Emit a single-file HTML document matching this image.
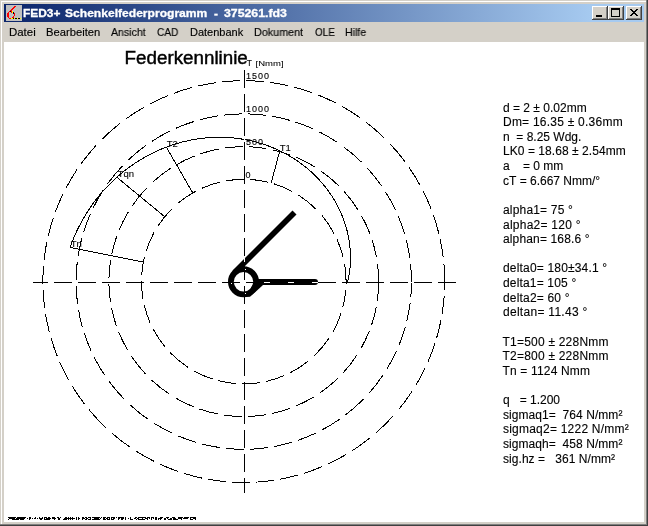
<!DOCTYPE html>
<html><head><meta charset="utf-8">
<style>
html,body{margin:0;padding:0;}
body{width:648px;height:526px;position:relative;overflow:hidden;background:#d4d0c8;font-family:"Liberation Sans",sans-serif;}
.abs{position:absolute;}
#title{left:4px;top:4px;width:640px;height:18px;background:linear-gradient(to right,#0a246a 0px,#a6caf0 588px,#a6caf0 640px);}
.tt{position:absolute;top:4px;height:18px;line-height:18px;color:#fff;font-weight:bold;font-size:11px;white-space:pre;-webkit-text-stroke:0.3px #fff;transform-origin:0 0;will-change:transform;}
#menu{left:4px;top:22px;width:640px;height:20px;}
.mi{position:absolute;top:22px;height:20px;line-height:20px;font-size:11px;color:#000;white-space:pre;-webkit-text-stroke:0.15px #000;transform-origin:0 0;will-change:transform;}
#content{left:4px;top:42px;width:640px;height:480px;background:#fff;}
.btn{position:absolute;top:6px;width:16px;height:14px;background:#d4d0c8;box-sizing:border-box;
 box-shadow: inset -1px -1px #404040, inset 1px 1px #ffffff, inset -2px -2px #808080, inset 2px 2px #d4d0c8;}
svg{position:absolute;left:0;top:0;will-change:transform;}
</style></head><body>
<!-- frame -->
<div class="abs" style="left:1px;top:1px;width:645px;height:524px;border-left:1px solid #fff;border-top:1px solid #fff;"></div>
<div class="abs" style="left:646px;top:0;width:1px;height:525px;background:#808080"></div>
<div class="abs" style="left:0;top:524px;width:647px;height:1px;background:#808080"></div>
<div class="abs" style="left:647px;top:0;width:1px;height:526px;background:#404040"></div>
<div class="abs" style="left:0;top:525px;width:648px;height:1px;background:#404040"></div>
<div id="title" class="abs"></div>
<div class="tt" style="left:22.7px;transform:scaleX(1.083)">FED3+</div>
<div class="tt" style="left:65px;transform:scaleX(1.098)">Schenkelfederprogramm</div>
<div class="tt" style="left:213.5px;transform:scaleX(1.083)">-</div>
<div class="tt" style="left:224px;transform:scaleX(1.118)">375261.fd3</div>
<div class="btn" style="left:592px"></div>
<div class="btn" style="left:608px"></div>
<div class="btn" style="left:626px"></div>
<div class="mi" style="left:9.3px;transform:scaleX(1.04)">Datei</div>
<div class="mi" style="left:46.3px;transform:scaleX(1.02)">Bearbeiten</div>
<div class="mi" style="left:110.5px;transform:scaleX(0.96)">Ansicht</div>
<div class="mi" style="left:157px;transform:scaleX(0.92)">CAD</div>
<div class="mi" style="left:190px">Datenbank</div>
<div class="mi" style="left:254px;transform:scaleX(0.98)">Dokument</div>
<div class="mi" style="left:314.5px;transform:scaleX(0.9)">OLE</div>
<div class="mi" style="left:345px;transform:scaleX(0.96)">Hilfe</div>
<div id="content" class="abs"></div>
<svg width="648" height="526" viewBox="0 0 648 526">
 <!-- icon -->
 <g transform="translate(6,5)" shape-rendering="crispEdges">
  <rect x="0" y="0" width="16" height="16" fill="#c0c0c0"/>
  <g fill="#ff0000">
   <rect x="8" y="1" width="2" height="1"/><rect x="7" y="2" width="2" height="1"/><rect x="6" y="3" width="2" height="1"/>
   <rect x="5" y="4" width="2" height="1"/><rect x="4" y="5" width="2" height="1"/><rect x="3" y="6" width="1" height="1"/>
   <rect x="5" y="6" width="1" height="2"/><rect x="2" y="7" width="1" height="1"/><rect x="1" y="8" width="2" height="3"/>
   <rect x="8" y="8" width="1" height="3"/><rect x="1" y="11" width="2" height="1"/><rect x="7" y="11" width="1" height="1"/>
   <rect x="2" y="12" width="1" height="1"/><rect x="6" y="12" width="2" height="1"/><rect x="3" y="13" width="2" height="1"/>
  </g>
  <g fill="#000"><rect x="4" y="6" width="1" height="1"/><rect x="7" y="7" width="1" height="2"/><rect x="7" y="13" width="1" height="1"/>
   <rect x="9" y="13" width="2" height="1"/><rect x="12" y="13" width="2" height="1"/></g>
  <g fill="#ffff00"><rect x="6" y="6" width="1" height="2"/><rect x="5" y="13" width="2" height="1"/><rect x="8" y="13" width="1" height="1"/>
   <rect x="11" y="13" width="1" height="1"/><rect x="14" y="13" width="1" height="1"/></g>
 </g>
 <!-- caption glyphs -->
 <g fill="#000" shape-rendering="crispEdges">
  <rect x="596" y="15" width="6" height="2"/>
  <path d="M611 8h9v9h-9z M612 10v6h7v-6z" fill-rule="evenodd"/>
  <rect x="630" y="9" width="2" height="1"/><rect x="636" y="9" width="2" height="1"/><rect x="631" y="10" width="2" height="1"/><rect x="635" y="10" width="2" height="1"/><rect x="632" y="11" width="4" height="1"/><rect x="633" y="12" width="2" height="1"/><rect x="632" y="13" width="4" height="1"/><rect x="631" y="14" width="2" height="1"/><rect x="635" y="14" width="2" height="1"/><rect x="630" y="15" width="2" height="1"/><rect x="636" y="15" width="2" height="1"/>
 </g>
 <!-- drawing -->
 <g fill="none" stroke="#000" stroke-width="1" shape-rendering="crispEdges">
  <g><path d="M346.10 281.60A102.30 102.30 0 0 0 344.50 263.57M343.21 257.45A102.30 102.30 0 0 0 337.04 239.51M334.06 233.46A102.30 102.30 0 0 0 321.87 215.49M316.38 209.51A102.30 102.30 0 0 0 298.27 195.01M292.33 191.54A102.30 102.30 0 0 0 274.27 183.94M268.25 182.26A102.30 102.30 0 0 0 250.23 179.50M244.24 179.30A102.30 102.30 0 0 0 226.20 180.83M220.20 182.06A102.30 102.30 0 0 0 202.23 188.13M196.15 191.07A102.30 102.30 0 0 0 178.22 203.09M172.20 208.54A102.30 102.30 0 0 0 157.57 226.55M154.01 232.58A102.30 102.30 0 0 0 146.31 250.59M144.60 256.60A102.30 102.30 0 0 0 141.74 274.61M141.50 280.60A102.30 102.30 0 0 0 142.93 298.65M144.13 304.65A102.30 102.30 0 0 0 150.10 322.66M153.01 328.75A102.30 102.30 0 0 0 164.93 346.75M170.26 352.71A102.30 102.30 0 0 0 188.28 367.52M194.28 371.12A102.30 102.30 0 0 0 212.38 378.95M218.38 380.69A102.30 102.30 0 0 0 236.37 383.63M242.36 383.89A102.30 102.30 0 0 0 260.41 382.54M266.42 381.37A102.30 102.30 0 0 0 284.46 375.47M290.45 372.64A102.30 102.30 0 0 0 308.42 360.91M314.42 355.62A102.30 102.30 0 0 0 329.42 337.59M333.04 331.61A102.30 102.30 0 0 0 340.98 313.56M342.75 307.56A102.30 102.30 0 0 0 345.79 289.59M346.08 283.60A102.30 102.30 0 0 0 346.10 281.60"/><path d="M378.70 281.60A134.90 134.90 0 0 0 377.48 263.53M376.53 257.48A134.90 134.90 0 0 0 371.98 239.56M369.85 233.55A134.90 134.90 0 0 0 361.43 215.56M357.85 209.55A134.90 134.90 0 0 0 344.22 191.52M338.52 185.55A134.90 134.90 0 0 0 320.54 170.66M314.47 166.69A134.90 134.90 0 0 0 296.49 157.42M290.45 155.02A134.90 134.90 0 0 0 272.46 149.78M266.45 148.61A134.90 134.90 0 0 0 248.55 146.78M242.55 146.71A134.90 134.90 0 0 0 224.49 148.09M218.45 149.10A134.90 134.90 0 0 0 200.45 153.85M194.47 156.04A134.90 134.90 0 0 0 176.46 164.71M170.49 168.36A134.90 134.90 0 0 0 152.52 182.28M146.53 188.13A134.90 134.90 0 0 0 132.01 206.10M128.18 212.10A134.90 134.90 0 0 0 119.09 230.18M116.79 236.13A134.90 134.90 0 0 0 111.72 254.16M110.61 260.19A134.90 134.90 0 0 0 108.95 278.10M108.92 284.10A134.90 134.90 0 0 0 110.47 302.15M111.54 308.18A134.90 134.90 0 0 0 116.46 326.13M118.75 332.21A134.90 134.90 0 0 0 127.60 350.13M131.38 356.17A134.90 134.90 0 0 0 145.67 374.16M151.60 380.07A134.90 134.90 0 0 0 169.54 394.22M175.59 397.99A134.90 134.90 0 0 0 193.65 406.83M199.62 409.06A134.90 134.90 0 0 0 217.59 413.93M223.62 414.98A134.90 134.90 0 0 0 241.55 416.48M247.55 416.45A134.90 134.90 0 0 0 265.58 414.73M271.60 413.60A134.90 134.90 0 0 0 289.63 408.48M295.57 406.17A134.90 134.90 0 0 0 313.62 397.03M319.61 393.18A134.90 134.90 0 0 0 337.63 378.52M343.38 372.61A134.90 134.90 0 0 0 357.24 354.60M360.94 348.51A134.90 134.90 0 0 0 369.49 330.59M371.67 324.59A134.90 134.90 0 0 0 376.37 306.58M377.36 300.54A134.90 134.90 0 0 0 378.70 282.60"/><path d="M411.50 281.60A167.70 167.70 0 0 0 410.53 263.63M409.79 257.68A167.70 167.70 0 0 0 406.17 239.67M404.50 233.65A167.70 167.70 0 0 0 398.05 215.79M395.33 209.75A167.70 167.70 0 0 0 385.50 191.91M381.49 185.87A167.70 167.70 0 0 0 367.11 167.94M361.37 162.02A167.70 167.70 0 0 0 343.42 146.69M337.39 142.44A167.70 167.70 0 0 0 319.50 131.96M313.53 129.08A167.70 167.70 0 0 0 295.60 122.10M289.62 120.28A167.70 167.70 0 0 0 271.58 116.22M265.65 115.33A167.70 167.70 0 0 0 247.71 113.95M241.71 113.91A167.70 167.70 0 0 0 223.75 115.10M217.81 115.93A167.70 167.70 0 0 0 199.85 119.76M193.97 121.48A167.70 167.70 0 0 0 175.95 128.24M169.95 131.04A167.70 167.70 0 0 0 152.04 141.23M146.05 145.33A167.70 167.70 0 0 0 128.16 160.15M122.24 166.07A167.70 167.70 0 0 0 107.44 183.98M103.35 189.97A167.70 167.70 0 0 0 93.17 207.89M90.37 213.90A167.70 167.70 0 0 0 83.67 231.80M81.92 237.80A167.70 167.70 0 0 0 78.10 255.76M77.28 261.71A167.70 167.70 0 0 0 76.11 279.66M76.15 285.66A167.70 167.70 0 0 0 77.55 303.60M78.44 309.53A167.70 167.70 0 0 0 82.49 327.45M84.31 333.43A167.70 167.70 0 0 0 91.30 351.36M94.23 357.44A167.70 167.70 0 0 0 104.73 375.32M108.99 381.34A167.70 167.70 0 0 0 124.24 399.19M130.26 405.02A167.70 167.70 0 0 0 148.20 419.38M154.14 423.32A167.70 167.70 0 0 0 172.09 433.19M178.13 435.91A167.70 167.70 0 0 0 196.00 442.34M202.02 444.01A167.70 167.70 0 0 0 219.91 447.59M225.86 448.34A167.70 167.70 0 0 0 243.83 449.30M249.83 449.19A167.70 167.70 0 0 0 267.75 447.58M273.80 446.60A167.70 167.70 0 0 0 291.66 442.33M297.62 440.43A167.70 167.70 0 0 0 315.57 433.17M321.61 430.16A167.70 167.70 0 0 0 339.55 419.27M345.51 414.93A167.70 167.70 0 0 0 363.40 399.15M369.04 393.13A167.70 167.70 0 0 0 382.90 375.27M386.76 369.27A167.70 167.70 0 0 0 396.33 351.30M398.92 345.34A167.70 167.70 0 0 0 405.13 327.39M406.72 321.35A167.70 167.70 0 0 0 410.08 303.41M410.75 297.45A167.70 167.70 0 0 0 411.50 281.60"/><path d="M444.70 281.60A200.90 200.90 0 0 0 443.88 263.50M443.25 257.53A200.90 200.90 0 0 0 440.25 239.54M438.87 233.57A200.90 200.90 0 0 0 433.51 215.48M431.31 209.49A200.90 200.90 0 0 0 423.39 191.55M420.20 185.46A200.90 200.90 0 0 0 409.13 167.47M404.83 161.48A200.90 200.90 0 0 0 389.71 143.51M383.83 137.55A200.90 200.90 0 0 0 365.77 121.96M359.82 117.59A200.90 200.90 0 0 0 341.75 106.20M335.80 103.00A200.90 200.90 0 0 0 317.83 94.84M311.75 92.54A200.90 200.90 0 0 0 293.71 87.00M287.76 85.57A200.90 200.90 0 0 0 269.79 82.39M263.71 81.69A200.90 200.90 0 0 0 245.74 80.71M239.74 80.74A200.90 200.90 0 0 0 221.78 81.91M215.70 82.67A200.90 200.90 0 0 0 197.77 86.04M191.71 87.57A200.90 200.90 0 0 0 173.74 93.31M167.68 95.68A200.90 200.90 0 0 0 149.69 104.10M143.67 107.43A200.90 200.90 0 0 0 125.74 119.05M119.66 123.64A200.90 200.90 0 0 0 101.72 139.56M95.92 145.61A200.90 200.90 0 0 0 81.21 163.59M76.99 169.64A200.90 200.90 0 0 0 66.22 187.66M63.16 193.68A200.90 200.90 0 0 0 55.49 211.60M53.36 217.61A200.90 200.90 0 0 0 48.23 235.63M46.92 241.62A200.90 200.90 0 0 0 44.10 259.64M43.54 265.62A200.90 200.90 0 0 0 42.91 283.73M43.06 289.72A200.90 200.90 0 0 0 44.60 307.65M45.48 313.71A200.90 200.90 0 0 0 49.25 331.69M50.90 337.72A200.90 200.90 0 0 0 57.06 355.69M59.55 361.69A200.90 200.90 0 0 0 68.49 379.71M71.95 385.65A200.90 200.90 0 0 0 84.27 403.71M89.02 409.68A200.90 200.90 0 0 0 105.75 427.56M111.77 433.02A200.90 200.90 0 0 0 129.83 447.04M135.76 450.98A200.90 200.90 0 0 0 153.80 461.21M159.77 464.08A200.90 200.90 0 0 0 177.86 471.37M183.79 473.33A200.90 200.90 0 0 0 201.80 478.06M207.81 479.25A200.90 200.90 0 0 0 225.89 481.70M231.87 482.15A200.90 200.90 0 0 0 249.86 482.41M255.86 482.14A200.90 200.90 0 0 0 273.88 480.24M279.92 479.23A200.90 200.90 0 0 0 297.94 475.07M303.93 473.29A200.90 200.90 0 0 0 321.88 466.71M327.94 464.03A200.90 200.90 0 0 0 345.87 454.64M351.94 450.91A200.90 200.90 0 0 0 369.90 438.00M375.93 432.94A200.90 200.90 0 0 0 393.44 415.65M398.66 409.58A200.90 200.90 0 0 0 411.92 391.58M415.72 385.55A200.90 200.90 0 0 0 425.36 367.61M428.10 361.57A200.90 200.90 0 0 0 434.90 343.57M436.74 337.60A200.90 200.90 0 0 0 441.09 319.50M442.14 313.59A200.90 200.90 0 0 0 444.21 295.59M444.54 289.60A200.90 200.90 0 0 0 444.70 281.60"/></g>
  <path d="M347.50 282.50 L347.93 280.69 L348.33 278.87 L348.69 277.04 L349.02 275.19 L349.32 273.33 L349.59 271.45 L349.82 269.57 L350.02 267.67 L350.18 265.76 L350.31 263.84 L350.41 261.91 L350.47 259.98 L350.49 258.03 L350.48 256.08 L350.43 254.12 L350.34 252.15 L350.22 250.18 L350.07 248.20 L349.87 246.22 L349.64 244.23 L349.37 242.24 L349.06 240.25 L348.72 238.26 L348.34 236.27 L347.92 234.28 L347.46 232.28 L346.96 230.29 L346.43 228.30 L345.86 226.32 L345.25 224.33 L344.60 222.36 L343.91 220.38 L343.18 218.41 L342.42 216.45 L341.61 214.50 L340.77 212.55 L339.89 210.62 L338.97 208.69 L338.02 206.77 L337.02 204.87 L335.99 202.97 L334.91 201.09 L333.81 199.22 L332.66 197.37 L331.47 195.53 L330.25 193.70 L328.99 191.89 L327.69 190.10 L326.36 188.33 L324.99 186.58 L323.58 184.84 L322.14 183.12 L320.66 181.43 L319.15 179.76 L317.60 178.11 L316.01 176.48 L314.39 174.87 L312.74 173.29 L311.05 171.74 L309.33 170.21 L307.58 168.70 L305.79 167.23 L303.97 165.78 L302.12 164.36 L300.24 162.97 L298.32 161.61 L296.38 160.28 L294.40 158.98 L292.40 157.71 L290.37 156.48 L288.31 155.28 L286.22 154.11 L284.10 152.98 L281.96 151.88 L279.78 150.82 L277.59 149.79 L275.37 148.80 L273.12 147.85 L270.85 146.93 L268.56 146.05 L266.24 145.21 L263.91 144.42 L261.55 143.66 L259.17 142.94 L256.77 142.26 L254.35 141.63 L251.91 141.03 L249.46 140.48 L246.99 139.97 L244.50 139.50 L242.00 139.08 L239.48 138.70 L236.95 138.37 L234.40 138.08 L231.84 137.83 L229.27 137.64 L226.69 137.48 L224.10 137.38 L221.50 137.31 L218.90 137.30 L216.28 137.33 L213.66 137.41 L211.03 137.54 L208.40 137.71 L205.76 137.94 L203.13 138.21 L200.48 138.53 L197.84 138.90 L195.20 139.31 L192.55 139.78 L189.91 140.29 L187.27 140.85 L184.63 141.46 L182.00 142.12 L179.37 142.83 L176.75 143.59 L174.13 144.40 L171.53 145.26 L168.93 146.16 L166.34 147.12 L163.76 148.12 L161.19 149.17 L158.63 150.27 L156.09 151.42 L153.56 152.62 L151.05 153.87 L148.55 155.17 L146.07 156.51 L143.60 157.90 L141.16 159.34 L138.73 160.83 L136.33 162.36 L133.94 163.94 L131.58 165.57 L129.25 167.25 L126.93 168.97 L124.64 170.73 L122.38 172.54 L120.15 174.40 L117.94 176.30 L115.76 178.25 L113.61 180.24 L111.49 182.27 L109.40 184.34 L107.34 186.46 L105.32 188.62 L103.33 190.82 L101.37 193.06 L99.45 195.35 L97.57 197.67 L95.72 200.03 L93.91 202.43 L92.14 204.87 L90.41 207.35 L88.72 209.86 L87.07 212.41 L85.46 214.99 L83.90 217.61 L82.37 220.27 L80.90 222.95 L79.46 225.67 L78.07 228.42 L76.73 231.21 L75.43 234.02 L74.18 236.86 L72.98 239.74 L71.83 242.64 L70.72 245.56 L70.08 247.33"/>
  <line x1="279.78" y1="150.82" x2="271.16" y2="183.01"/><line x1="166.34" y1="147.12" x2="193.00" y2="193.30"/><line x1="116.84" y1="177.27" x2="165.02" y2="216.98"/><line x1="70.08" y1="247.33" x2="143.53" y2="262.14"/>
 </g>
 <!-- spring -->
 <g fill="none" stroke="#000">
  <circle cx="243.5" cy="281.8" r="12.6" stroke-width="5.8"/>
  <line x1="234.5" y1="272.5" x2="294.5" y2="212.5" stroke-width="5.7"/>
  <line x1="254" y1="282" x2="315" y2="282" stroke-width="6"/><circle cx="315" cy="282" r="3" fill="#000" stroke="none"/>
  <path d="M256 279 L261 279 L263 285 L250 296.8 L246 296.8 Z" fill="#000" stroke="none"/>
 </g>
 <g fill="#fff" shape-rendering="crispEdges"><rect x="245" y="269" width="1" height="1"/><rect x="245" y="293" width="1" height="1"/><rect x="231" y="283" width="1" height="1"/></g>
 <g fill="#000" shape-rendering="crispEdges"><rect x="8" y="517" width="8" height="1"/><rect x="17" y="517" width="9" height="1"/><rect x="29" y="517" width="2" height="1"/><rect x="35" y="517" width="1" height="1"/><rect x="9" y="518" width="6" height="1"/><rect x="16" y="518" width="9" height="1"/><rect x="27" y="518" width="1" height="1"/><rect x="29" y="518" width="2" height="1"/><rect x="32" y="518" width="1" height="1"/><rect x="34" y="518" width="2" height="1"/><rect x="8" y="519" width="1" height="1"/><rect x="12" y="519" width="7" height="1"/><rect x="20" y="519" width="4" height="1"/><rect x="29" y="519" width="1" height="1"/><rect x="39" y="517" width="1" height="1"/><rect x="42" y="517" width="1" height="1"/><rect x="44" y="517" width="3" height="1"/><rect x="48" y="517" width="2" height="1"/><rect x="52" y="517" width="3" height="1"/><rect x="57" y="517" width="2" height="1"/><rect x="60" y="517" width="1" height="1"/><rect x="65" y="517" width="1" height="1"/><rect x="37" y="518" width="1" height="1"/><rect x="39" y="518" width="4" height="1"/><rect x="44" y="518" width="1" height="1"/><rect x="46" y="518" width="5" height="1"/><rect x="52" y="518" width="4" height="1"/><rect x="58" y="518" width="2" height="1"/><rect x="64" y="518" width="2" height="1"/><rect x="40" y="519" width="2" height="1"/><rect x="44" y="519" width="6" height="1"/><rect x="54" y="519" width="1" height="1"/><rect x="58" y="519" width="2" height="1"/><rect x="63" y="519" width="3" height="1"/><rect x="66" y="517" width="1" height="1"/><rect x="68" y="517" width="1" height="1"/><rect x="70" y="517" width="1" height="1"/><rect x="72" y="517" width="1" height="1"/><rect x="76" y="517" width="1" height="1"/><rect x="78" y="517" width="1" height="1"/><rect x="82" y="517" width="2" height="1"/><rect x="85" y="517" width="2" height="1"/><rect x="88" y="517" width="3" height="1"/><rect x="92" y="517" width="4" height="1"/><rect x="66" y="518" width="9" height="1"/><rect x="76" y="518" width="1" height="1"/><rect x="78" y="518" width="2" height="1"/><rect x="82" y="518" width="3" height="1"/><rect x="86" y="518" width="2" height="1"/><rect x="90" y="518" width="1" height="1"/><rect x="94" y="518" width="2" height="1"/><rect x="66" y="519" width="1" height="1"/><rect x="68" y="519" width="1" height="1"/><rect x="70" y="519" width="1" height="1"/><rect x="72" y="519" width="1" height="1"/><rect x="76" y="519" width="1" height="1"/><rect x="78" y="519" width="1" height="1"/><rect x="82" y="519" width="1" height="1"/><rect x="85" y="519" width="2" height="1"/><rect x="88" y="519" width="3" height="1"/><rect x="92" y="519" width="4" height="1"/><rect x="96" y="517" width="4" height="1"/><rect x="101" y="517" width="1" height="1"/><rect x="103" y="517" width="3" height="1"/><rect x="107" y="517" width="3" height="1"/><rect x="111" y="517" width="4" height="1"/><rect x="116" y="517" width="1" height="1"/><rect x="118" y="517" width="6" height="1"/><rect x="125" y="517" width="1" height="1"/><rect x="96" y="518" width="3" height="1"/><rect x="100" y="518" width="1" height="1"/><rect x="103" y="518" width="2" height="1"/><rect x="106" y="518" width="2" height="1"/><rect x="109" y="518" width="1" height="1"/><rect x="111" y="518" width="1" height="1"/><rect x="113" y="518" width="2" height="1"/><rect x="118" y="518" width="2" height="1"/><rect x="121" y="518" width="3" height="1"/><rect x="125" y="518" width="1" height="1"/><rect x="96" y="519" width="4" height="1"/><rect x="103" y="519" width="3" height="1"/><rect x="107" y="519" width="3" height="1"/><rect x="111" y="519" width="3" height="1"/><rect x="118" y="519" width="1" height="1"/><rect x="121" y="519" width="2" height="1"/><rect x="125" y="519" width="1" height="1"/><rect x="130" y="517" width="1" height="1"/><rect x="135" y="517" width="2" height="1"/><rect x="138" y="517" width="8" height="1"/><rect x="147" y="517" width="3" height="1"/><rect x="151" y="517" width="3" height="1"/><rect x="155" y="517" width="1" height="1"/><rect x="128" y="518" width="1" height="1"/><rect x="130" y="518" width="1" height="1"/><rect x="134" y="518" width="2" height="1"/><rect x="137" y="518" width="2" height="1"/><rect x="142" y="518" width="1" height="1"/><rect x="145" y="518" width="3" height="1"/><rect x="149" y="518" width="1" height="1"/><rect x="151" y="518" width="1" height="1"/><rect x="153" y="518" width="1" height="1"/><rect x="155" y="518" width="1" height="1"/><rect x="130" y="519" width="3" height="1"/><rect x="136" y="519" width="1" height="1"/><rect x="138" y="519" width="7" height="1"/><rect x="147" y="519" width="1" height="1"/><rect x="151" y="519" width="1" height="1"/><rect x="155" y="519" width="1" height="1"/><rect x="156" y="517" width="1" height="1"/><rect x="160" y="517" width="3" height="1"/><rect x="166" y="517" width="3" height="1"/><rect x="172" y="517" width="3" height="1"/><rect x="178" y="517" width="5" height="1"/><rect x="184" y="517" width="2" height="1"/><rect x="156" y="518" width="1" height="1"/><rect x="158" y="518" width="4" height="1"/><rect x="164" y="518" width="2" height="1"/><rect x="167" y="518" width="1" height="1"/><rect x="170" y="518" width="2" height="1"/><rect x="173" y="518" width="3" height="1"/><rect x="178" y="518" width="4" height="1"/><rect x="183" y="518" width="3" height="1"/><rect x="156" y="519" width="1" height="1"/><rect x="158" y="519" width="1" height="1"/><rect x="160" y="519" width="1" height="1"/><rect x="164" y="519" width="2" height="1"/><rect x="168" y="519" width="4" height="1"/><rect x="173" y="519" width="5" height="1"/><rect x="181" y="519" width="1" height="1"/><rect x="186" y="517" width="3" height="1"/><rect x="190" y="517" width="6" height="1"/><rect x="186" y="518" width="2" height="1"/><rect x="190" y="518" width="1" height="1"/><rect x="193" y="518" width="3" height="1"/><rect x="190" y="519" width="3" height="1"/><rect x="195" y="519" width="1" height="1"/></g>
 <!-- axes -->
 <g stroke-width="1" shape-rendering="crispEdges">
  <line x1="33" y1="282.5" x2="456" y2="282.5" stroke="#fff"/>
  <line x1="456" y1="282.5" x2="33" y2="282.5" stroke="#000" stroke-dasharray="18 6"/>
  <line x1="244.5" y1="70" x2="244.5" y2="493" stroke="#fff"/>
  <line x1="244.5" y1="70" x2="244.5" y2="493" stroke="#000" stroke-dasharray="18 6"/>
 </g>
 <g font-size="9.5" fill="#000" stroke="#000" stroke-width="0.1">
  <text x="279.7" y="151.0">T1</text><text x="166.7" y="147.0">T2</text><text x="117.7" y="177.0">Tqn</text><text x="70.7" y="247.0">Tn</text>
 </g>
 <g font-size="9" fill="#000" letter-spacing="1" stroke="#000" stroke-width="0.12">
  <text x="246" y="79">1500</text>
  <text x="246" y="112">1000</text>
  <text x="246" y="145">500</text>
  <text x="245.5" y="178">0</text>
 </g>
 <text x="246.8" y="66" font-size="8.5" fill="#000" stroke="#000" stroke-width="0.1">T</text>
 <text x="255.6" y="66" font-size="7.5" fill="#000" stroke="#000" stroke-width="0.05" textLength="28" lengthAdjust="spacingAndGlyphs">[Nmm]</text>
 <text x="124.6" y="64" font-size="18.8" fill="#000" stroke="#000" stroke-width="0.45">Federkennlinie</text>
 <g font-size="12" fill="#000" stroke="#000" stroke-width="0.12">
<text x="503.0" y="112.0">d = 2 ± 0.02mm</text>
<text x="503.0" y="126.0" textLength="119.64" lengthAdjust="spacing">Dm= 16.35 ± 0.36mm</text>
<text x="503.0" y="141.0">n  = 8.25 Wdg.</text>
<text x="503.0" y="155.0" textLength="122.67" lengthAdjust="spacing">LK0 = 18.68 ± 2.54mm</text>
<text x="503.0" y="170.0">a    = 0 mm</text>
<text x="503.0" y="185.0">cT = 6.667 Nmm/°</text>
<text x="503.0" y="214.0" textLength="69.86" lengthAdjust="spacing">alpha1= 75 °</text>
<text x="503.0" y="229.0" textLength="77.53" lengthAdjust="spacing">alpha2= 120 °</text>
<text x="503.0" y="243.0" textLength="86.55" lengthAdjust="spacing">alphan= 168.6 °</text>
<text x="503.0" y="272.0" textLength="104.14" lengthAdjust="spacing">delta0= 180±34.1 °</text>
<text x="503.0" y="287.0" textLength="73.20" lengthAdjust="spacing">delta1= 105 °</text>
<text x="503.0" y="302.0" textLength="66.53" lengthAdjust="spacing">delta2= 60 °</text>
<text x="503.0" y="316.0" textLength="84.31" lengthAdjust="spacing">deltan= 11.43 °</text>
<text x="502.5" y="346.0" textLength="105.97" lengthAdjust="spacing">T1=500 ± 228Nmm</text>
<text x="502.5" y="360.0" textLength="105.97" lengthAdjust="spacing">T2=800 ± 228Nmm</text>
<text x="502.5" y="375.0" textLength="87.48" lengthAdjust="spacing">Tn = 1124 Nmm</text>
<text x="503.0" y="404.0">q   = 1.200</text>
<text x="503.0" y="419.0" textLength="119.39" lengthAdjust="spacing">sigmaq1=  764 N/mm²</text>
<text x="503.0" y="433.0" textLength="125.72" lengthAdjust="spacing">sigmaq2= 1222 N/mm²</text>
<text x="503.0" y="448.0" textLength="119.39" lengthAdjust="spacing">sigmaqh=  458 N/mm²</text>
<text x="503.0" y="463.0" textLength="112.05" lengthAdjust="spacing">sig.hz =   361 N/mm²</text>
 </g>
</svg>
</body></html>
